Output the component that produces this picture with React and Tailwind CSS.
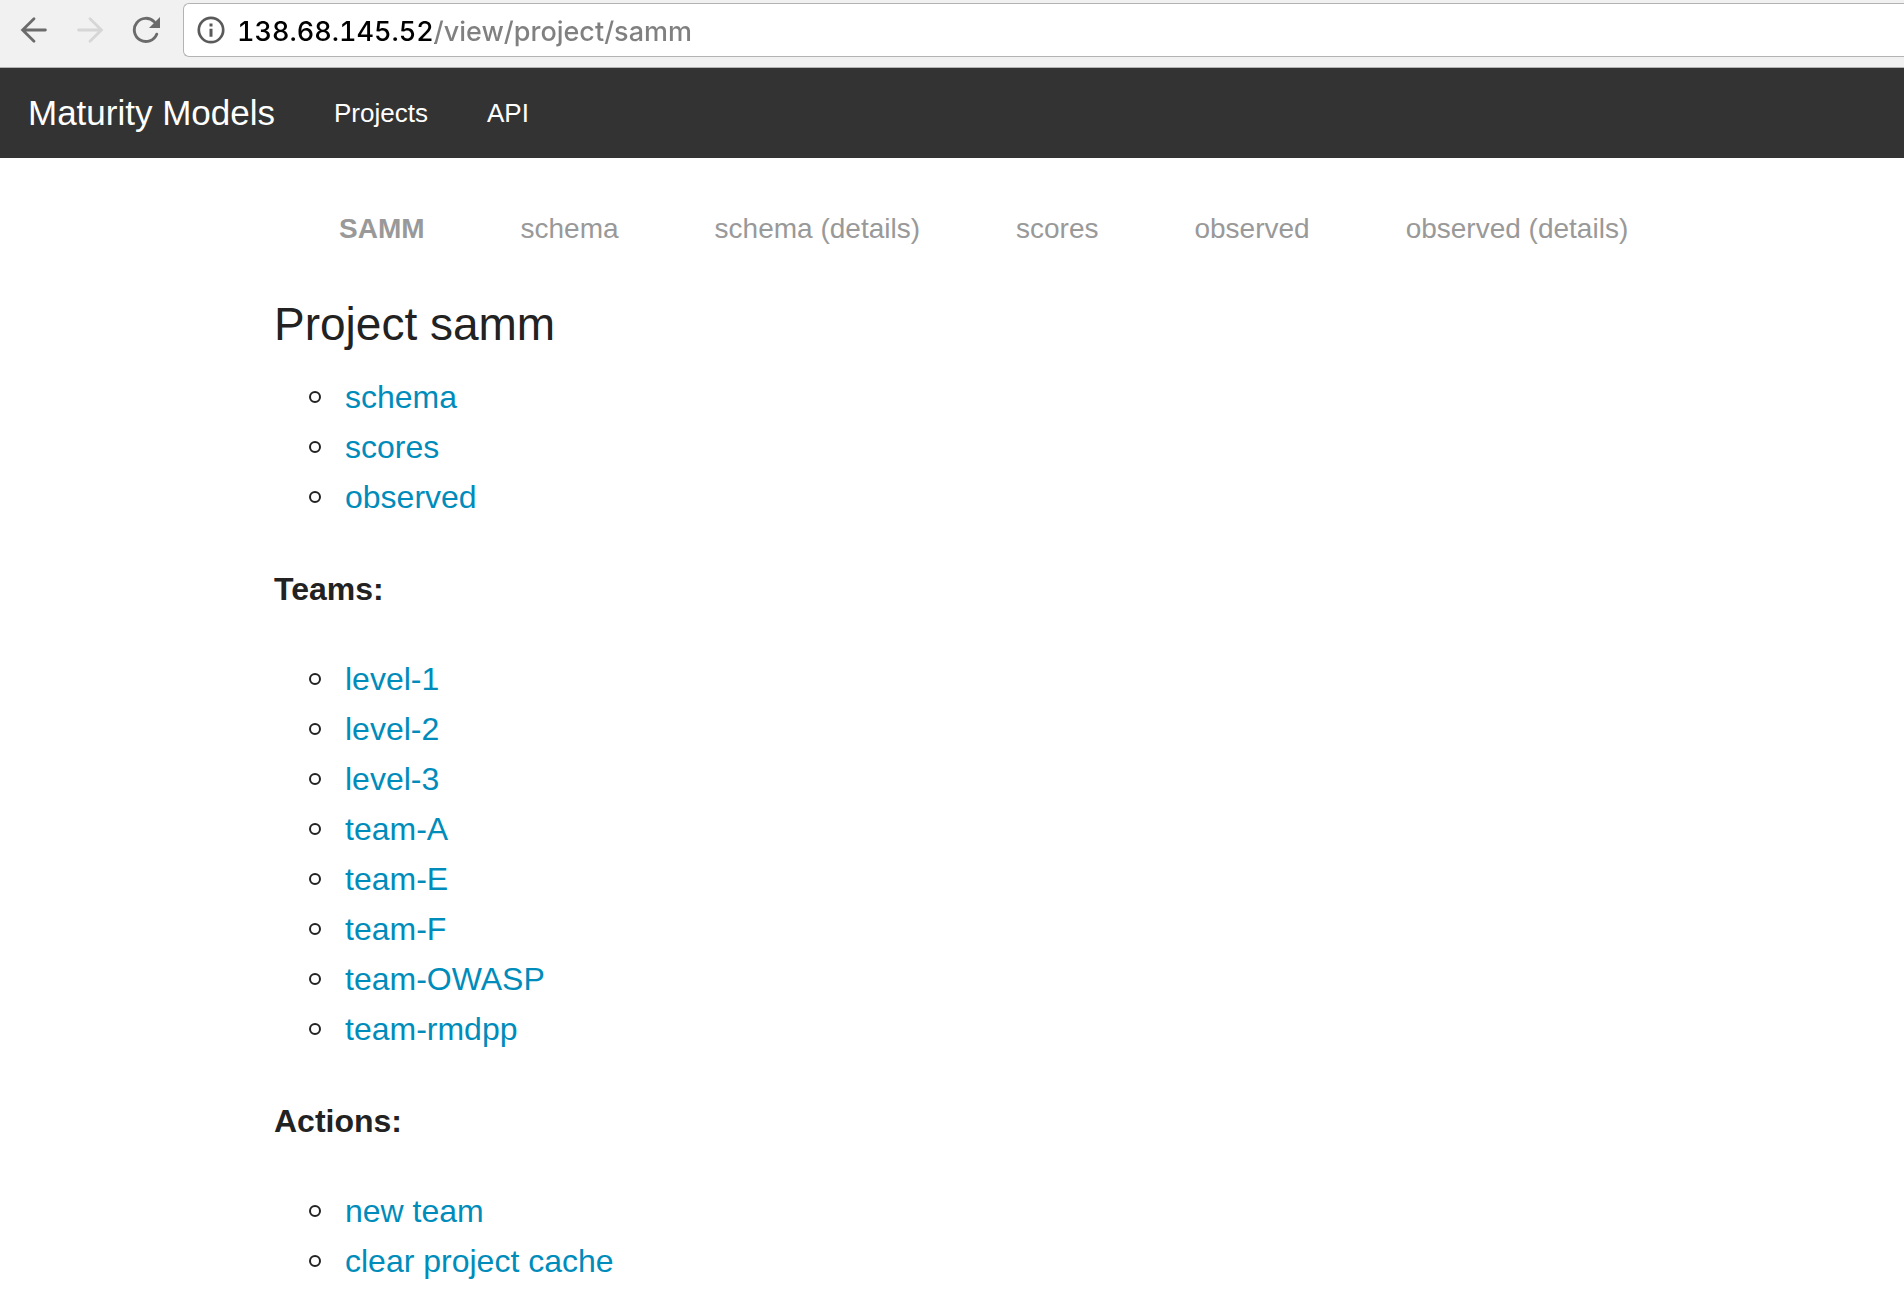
const tabs = ['schema', 'schema (details)', 'scores', 'observed', 'observed (details)'];
const views = ['schema', 'scores', 'observed'];
const teams = ['level-1', 'level-2', 'level-3', 'team-A', 'team-E', 'team-F', 'team-OWASP', 'team-rmdpp'];
const actions = ['new team', 'clear project cache'];

function Arrow({ flip }) {
  return (
    <svg viewBox="0 0 28 28" className={flip ? 'size-7 rotate-180' : 'size-7'} fill="none" stroke="currentColor" strokeWidth="2.8" strokeLinecap="round" aria-hidden="true">
      <path d="M25.4 14H3M14 2.7L2.6 14L14 25.3" strokeLinejoin="miter" />
    </svg>
  );
}

function Reload() {
  return (
    <svg viewBox="0 0 28 28" className="size-7" fill="none" aria-hidden="true">
      <path d="M22.2 5.8A11.6 11.6 0 1 0 24.7 18.2" stroke="currentColor" strokeWidth="2.9" strokeLinecap="round" />
      <path d="M28 1V12H17Z" fill="currentColor" />
    </svg>
  );
}

function Info() {
  return (
    <svg viewBox="0 0 28 28" className="size-7" fill="none" aria-hidden="true">
      <circle cx="14" cy="14" r="12.2" stroke="currentColor" strokeWidth="2.7" />
      <path d="M12.5 7.6h3v3h-3zM12.5 12.8h3v8h-3z" fill="currentColor" />
    </svg>
  );
}

function BrowserBar() {
  return (
    <header className="flex items-start border-b border-[#b3b3b3] bg-[#f1f1f1] pt-[3px] pb-[10px] pl-5 text-[#6b6b6b]">
      <div className="flex h-[54px] shrink-0 items-center gap-7 pr-[23px]">
        <button type="button" aria-label="Back"><Arrow /></button>
        <button type="button" aria-label="Forward" disabled className="text-[#d6d6d6]"><Arrow flip /></button>
        <button type="button" aria-label="Reload"><Reload /></button>
      </div>
      <div className="flex h-[54px] grow items-center gap-3 rounded-l-md border border-r-0 border-[#b3b3b3] bg-white pl-[13px]">
        <button type="button" aria-label="Site information" className="text-[#5a5a5a]"><Info /></button>
        <input
          type="text"
          aria-label="Address"
          defaultValue="138.68.145.52/view/project/samm"
          className="h-full min-w-0 grow bg-[linear-gradient(to_right,#000_198px,#808080_198px)] bg-clip-text pt-0.5 font-['Inter',sans-serif] text-[27px] font-medium text-transparent tabular-nums outline-none"
        />
      </div>
    </header>
  );
}

function LinkList({ items }) {
  return (
    <ul className="pl-[35px]">
      {items.map((item) => (
        <li key={item} className="flex items-center gap-6 before:size-3 before:shrink-0 before:rounded-full before:border-2 before:border-[#222]">
          <a href="#" className="text-[#008cba]">{item}</a>
        </li>
      ))}
    </ul>
  );
}

export default function App() {
  return (
    <div className="min-h-screen bg-white font-['Liberation_Sans',Arial,sans-serif] text-[#222]">
      <BrowserBar />
      <nav className="flex h-[90px] items-center bg-[#333] pl-7 text-[26px] text-white">
        <a href="#" className="mr-[59px] text-[35px]">Maturity Models</a>
        <a href="#" className="mr-[59px]">Projects</a>
        <a href="#">API</a>
      </nav>
      <main className="mx-auto max-w-[1356px] text-[32px] leading-[50px]">
        <nav className="flex gap-24 pt-[51px] pl-[65px] text-[28px] leading-10 whitespace-nowrap text-[#999]">
          <a href="#" className="font-bold">SAMM</a>
          {tabs.map((tab) => (
            <a key={tab} href="#">{tab}</a>
          ))}
        </nav>
        <h1 className="mt-[43px] mb-4 text-[46px] leading-[64px]">Project samm</h1>
        <LinkList items={views} />
        <h2 className="mt-[42px] mb-10 font-bold">Teams:</h2>
        <LinkList items={teams} />
        <h2 className="mt-[42px] mb-10 font-bold">Actions:</h2>
        <LinkList items={actions} />
      </main>
    </div>
  );
}
